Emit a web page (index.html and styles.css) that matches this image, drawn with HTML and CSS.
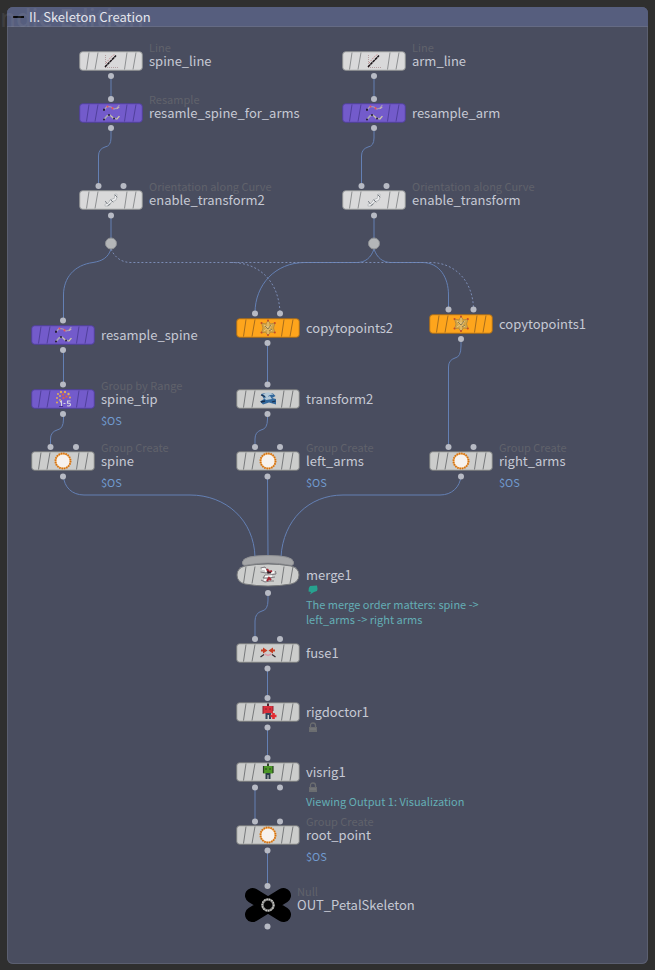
FILE: index.html
```html
<!DOCTYPE html>
<html lang="en">
<head>
<meta charset="utf-8">
<title>Skeleton Creation</title>
<link rel="stylesheet" href="styles.css">
</head>
<body>
<svg class="defs" aria-hidden="true">
  <defs>
    <g id="stripes"><path d="M10 1.5L7.500 18.500M19 1.500L16 18.500M48 1.500L45.500 18.500M57 1.500L54 18.500"/></g>
    <g id="plate"><rect class="face" x=".7" y=".7" width="62.600" height="18.600" rx="3"/><use href="#stripes"/></g>
    <g id="i-line">
      <path d="M26.500 4V16.500H39.500" fill="none" stroke="#b5a0a2" stroke-dasharray="1 1"/>
      <path d="M27 12L32 6L36 3" fill="none" stroke="#b8686c" stroke-width="1" stroke-dasharray="1 1.500"/>
      <path d="M26 16L37 4.500" stroke="#1b1418" stroke-width="1.500" stroke-dasharray="3 .4"/>
    </g>
    <g id="i-resample" fill="none" stroke-linecap="round">
      <path d="M25 7L28 3.500L32 4L35 6L38 5L40 2.500" stroke="#a99fb5" stroke-width="1.200"/>
      <path d="M25 16.500L28 13L31 12L34 15L38 16L40 13.500" stroke="#a8a8b4" stroke-width="1.500"/>
      <path d="M25 6.500V7M25 16.500V16.600M30 12V12.100M35 15.500V15.600" stroke="#221a33" stroke-width="2"/>
      <path d="M28.500 3.500V3.600M33.500 5V5.600" stroke="#e0525e" stroke-width="2"/>
      <path d="M38 5.500L40 4.500M32 13L34 14.500M38 16L40 13.500" stroke="#d5c5a9" stroke-width="1"/>
    </g>
    <g id="i-orient" fill="none" stroke-linecap="round">
      <path d="M27 15C32 15 30 10 34 10S36 6 37 5" stroke="#aeb2b5" stroke-width="3"/>
      <path d="M27 15C32 15 30 10 34 10S36 6 37 5" stroke="#f0f0f2" stroke-width="1.500"/>
      <path d="M26.500 11.500L28 13.500M29 15.500L31 14M32 10L34 12M36 5L38 7" stroke="#777c82" stroke-width="1"/>
    </g>
    <g id="i-range">
      <g fill="#e0ad56"><circle cx="27" cy="5" r="1"/><circle cx="30" cy="3" r="1.200"/><circle cx="34" cy="3" r="1.200"/><circle cx="37.500" cy="5" r="1.200"/><circle cx="26" cy="9" r="1"/><circle cx="29" cy="7" r="1"/><circle cx="26" cy="13.500" r="1"/><circle cx="39" cy="8.500" r="1"/><circle cx="29" cy="11" r="1"/></g>
      <g fill="#d8604b"><circle cx="32" cy="5.500" r="1.200"/><circle cx="35.500" cy="7.500" r="1.200"/><circle cx="32.500" cy="9" r="1.200"/></g>
      <path d="M29 13L30.500 12V17M32.500 14.500H34.500M39.500 12H36.500V14.200H38Q39.800 14.500 39.500 16Q39 17.300 36 16.800" fill="none" stroke="#d5d4df" stroke-width="1.100"/>
      <path d="M28 17.500H32" stroke="#463286"/>
    </g>
    <g id="i-group">
      <circle cx="32" cy="10" r="7.400" fill="#f7f2ee" stroke="#f3b060" stroke-width="1.600"/>
      <circle cx="32" cy="10" r="7.600" fill="none" stroke="#cf6f14" stroke-width="1.800" stroke-dasharray="1.400 .985"/>
    </g>
    <g id="i-copy">
      <path d="M32 2.500L34.500 6L39 5L37.500 10L39 14.500L34.500 14L32 17.500L29.500 14L25.500 15L27 10L25.500 5L30 6Z" fill="#d3a648" stroke="#ac8540" stroke-width=".8"/>
      <path d="M28 7L36 13M36 7L28 13M32 4V16M29 9L35 9" stroke="#e9c781" stroke-width="1" fill="none"/>
      <path d="M29 8L32 11L35 7M33 13L36 11" stroke="#8d7a4c" stroke-width="1" fill="none"/>
      <g fill="#c44a28"><circle cx="25.500" cy="5" r="1"/><circle cx="32" cy="2.500" r="1"/><circle cx="38.800" cy="5" r="1"/><circle cx="25.500" cy="14.500" r="1"/><circle cx="32" cy="17" r="1"/><circle cx="38.800" cy="14.500" r="1"/></g>
    </g>
    <g id="i-transform">
      <path d="M25 5L30 4L37 4.500L39.500 7L36 9L40 10V15.500L33 13.500L27 15.500L24 12.500L28 10Z" fill="#31679b"/>
      <path d="M27 5.500Q33 1 37.500 6Q33 5 31 9ZM28 9L34 7L36 10L30 11Z" fill="#b4c9d8"/>
      <path d="M25 6L29 7.500M36 13L39.500 12M25 13L29 12" stroke="#182d49" stroke-width="1.300"/>
    </g>
    <g id="i-merge" fill="none">
      <path d="M24.500 3L29 2L31 5M24.500 7L30 8L33 7M39.500 6L40 9L34 10L29 10L27 13L33 13L39 12M25 15L29 17L34 16L38 16" stroke="#6b646b" stroke-width=".8"/>
      <path d="M26 4L29 4L30 7M35 8L38 7M29 11.500L36 11M28 15L31 15" stroke="#fff" stroke-width="1.400"/>
      <path d="M31 4L33 7L36 6M31 16L33 13L35 15" stroke="#a72a36" stroke-width="2.200"/>
      <path d="M32 6V8L35 7.500" stroke="#301923" stroke-width="1.400"/>
    </g>
    <g id="i-fuse">
      <path d="M25 6.500H27V4.500L31.500 7.500L27 10.500V8.500H25ZM39 6.500H37V4.500L32.500 7.500L37 10.500V8.500H39Z" fill="#c63e25"/>
      <path d="M24.500 14L28 11.500M39.500 14L36 11.500" stroke="#332a31" stroke-width="1.300"/>
      <path d="M28.500 11L32 12.500L35.500 11" fill="none" stroke="#dd9aa7" stroke-width="1.500"/>
    </g>
    <g id="i-doctor">
      <path d="M32 1.500V5" stroke="#4b2630" stroke-width="2"/>
      <rect x="27" y="4" width="10" height="7.500" fill="#d9303b"/>
      <path d="M27 4V12M37 4V9M29 7H31M33 7H35" stroke="#8a2231" stroke-width="1"/>
      <path d="M30.500 11V17M34 11V17M29.500 12H34" stroke="#35465c" stroke-width="2"/>
      <path d="M37.500 11V17M34.500 14H40.500" stroke="#e22b31" stroke-width="2.600"/>
    </g>
    <g id="i-vis">
      <path d="M32 1.500V5" stroke="#32412b" stroke-width="2"/>
      <rect x="27" y="4" width="10" height="7.500" fill="#4c9827"/>
      <path d="M27.500 4V11M37 4V11M29 7H31M33 7H35" stroke="#263f22" stroke-width="1.200"/>
      <path d="M30.500 11V17M33.500 11V17M29.500 12H34" stroke="#2b3c49" stroke-width="2"/>
    </g>
    <g id="lock">
      <path d="M2.500 6V3.500Q2.500 1 5 1T7.500 3.500V6" fill="none" stroke="#6b6d70" stroke-width="1.300"/>
      <path d="M1 5H9V10H1Z" fill="#6b6d70"/>
      <path d="M2 7H8" stroke="#7d7f80"/>
    </g>
  </defs>
</svg>

<div class="watermark" aria-hidden="true">ndie Edition</div>
<main class="netbox">
  <header class="netbox-head">
    <button class="collapse" type="button" aria-label="Collapse"></button>
    <h1>II. Skeleton Creation</h1>
  </header>
  <div class="canvas">
    <svg class="wires" width="641" height="937" viewBox="7 27 641 937" aria-hidden="true">
      <g class="wire">
        <path d="M111 76V99M374 76V99"/>
        <path d="M111 128V138Q111 146 105 147Q98.500 149 98.500 156V186"/>
        <path d="M374 128V138Q374 146 368 147Q361.500 149 361.500 156V186"/>
        <path d="M111 215V243M374 215V243"/>
        <path d="M111 249C108 258 102 261 93 262.500C74 265 63.500 278 63.500 295V320"/>
        <path d="M374 249C371 258 365 262.500 357 262.500H305C275 262.500 255 285 255 313"/>
        <path d="M374 249C377 258 383 262.500 391 262.500H422C440 262.500 448.500 278 448.500 295V309"/>
        <path d="M63.500 350V384"/>
        <path d="M63.500 413V419Q63.500 429 57 430Q50.500 432 50.500 439V447"/>
        <path d="M267.500 343V384"/>
        <path d="M267.500 413V419Q267.500 429 261 430Q255 432 255 439V447"/>
        <path d="M461 339V346Q461 357 455 358Q448.500 360 448.500 367V447"/>
        <path d="M63.500 476C64 487 72 495 84 495H190C226 495 254 520 255 557"/>
        <path d="M267.500 476L268 557"/>
        <path d="M461 476C460 487 452 495 440 495H343C309 495 283 520 281 557"/>
        <path d="M268 593V600Q268 610 262 611Q255 613 255 621V639"/>
        <path d="M267.500 668V698M267.500 727V758M255 787V821M267.500 850V886"/>
      </g>
      <g class="wire dashed">
        <path d="M111 249C115 258 122 262.500 131 262.500H430C456 262.500 473 282 473.500 309"/>
        <path d="M231 262.500C260 262.500 279 282 280 313"/>
      </g>
      <g class="ports">
        <circle cx="111" cy="76" r="3"/><circle cx="111" cy="99" r="3"/><circle cx="111" cy="128" r="3"/>
        <circle cx="98.500" cy="186" r="3"/><circle cx="123.500" cy="186" r="3"/><circle cx="111" cy="215.500" r="3"/>
        <circle cx="374" cy="76" r="3"/><circle cx="374" cy="99" r="3"/><circle cx="374" cy="128" r="3"/>
        <circle cx="361.500" cy="186" r="3"/><circle cx="386.500" cy="186" r="3"/><circle cx="374" cy="215.500" r="3"/>
        <circle cx="63" cy="320.500" r="3"/><circle cx="63" cy="350" r="3"/><circle cx="63" cy="384.500" r="3"/>
        <circle cx="63" cy="414" r="3"/><circle cx="50.500" cy="447" r="3"/><circle cx="76" cy="447" r="3"/><circle cx="63" cy="476.500" r="3"/>
        <circle cx="255" cy="313.500" r="3"/><circle cx="280" cy="313.500" r="3"/><circle cx="267.500" cy="343" r="3"/>
        <circle cx="267.500" cy="384.500" r="3"/><circle cx="267.500" cy="414" r="3"/>
        <circle cx="255" cy="447" r="3"/><circle cx="280" cy="447" r="3"/><circle cx="267.500" cy="476.500" r="3"/>
        <circle cx="448.500" cy="309.500" r="3"/><circle cx="473.500" cy="309.500" r="3"/><circle cx="461" cy="339" r="3"/>
        <circle cx="448.500" cy="447" r="3"/><circle cx="473.500" cy="447" r="3"/><circle cx="461" cy="476.500" r="3"/>
        <circle cx="268" cy="593" r="3"/><circle cx="255" cy="639" r="3"/><circle cx="280" cy="639" r="3"/><circle cx="267.500" cy="668.500" r="3"/>
        <circle cx="267.500" cy="698" r="3"/><circle cx="267.500" cy="727.500" r="3"/><circle cx="267.500" cy="758" r="3"/>
        <circle cx="255" cy="787.500" r="3"/><circle cx="280" cy="787.500" r="3"/>
        <circle cx="255" cy="821.500" r="3"/><circle cx="280" cy="821.500" r="3"/><circle cx="267.500" cy="850.500" r="3"/>
        <circle cx="267.500" cy="886" r="3"/><circle cx="267.500" cy="926.500" r="3"/>
        <circle class="dot" cx="111" cy="243.500" r="5.500"/><circle class="dot" cx="374" cy="243.500" r="5.500"/>
        <path class="collector" d="M242.500 562Q243 555.500 268 555.500T293.500 562Q294 566.500 289 565Q268 561 247 565Q242 566.500 242.500 562Z"/>
      </g>
    </svg>

    <article class="node spine-line"><svg class="tile light"><use href="#plate"/><use href="#i-line"/></svg><p class="type">Line</p><h2>spine_line</h2></article>
    <article class="node resample-arms"><svg class="tile purple"><use href="#plate"/><use href="#i-resample"/></svg><p class="type">Resample</p><h2>resamle_spine_for_arms</h2></article>
    <article class="node enable-2"><svg class="tile light"><use href="#plate"/><use href="#i-orient"/></svg><p class="type">Orientation along Curve</p><h2>enable_transform2</h2></article>
    <article class="node arm-line"><svg class="tile light"><use href="#plate"/><use href="#i-line"/></svg><p class="type">Line</p><h2>arm_line</h2></article>
    <article class="node resample-arm"><svg class="tile purple"><use href="#plate"/><use href="#i-resample"/></svg><h2>resample_arm</h2></article>
    <article class="node enable-1"><svg class="tile light"><use href="#plate"/><use href="#i-orient"/></svg><p class="type">Orientation along Curve</p><h2>enable_transform</h2></article>
    <article class="node resample-spine"><svg class="tile purple"><use href="#plate"/><use href="#i-resample"/></svg><h2>resample_spine</h2></article>
    <article class="node spine-tip"><svg class="tile purple"><use href="#plate"/><use href="#i-range"/></svg><p class="type">Group by Range</p><h2>spine_tip</h2><p class="value">$OS</p></article>
    <article class="node spine"><svg class="tile"><use href="#plate"/><use href="#i-group"/></svg><p class="type">Group Create</p><h2>spine</h2><p class="value">$OS</p></article>
    <article class="node copy-2"><svg class="tile orange"><use href="#plate"/><use href="#i-copy"/></svg><h2>copytopoints2</h2></article>
    <article class="node transform-2"><svg class="tile"><use href="#plate"/><use href="#i-transform"/></svg><h2>transform2</h2></article>
    <article class="node left-arms"><svg class="tile"><use href="#plate"/><use href="#i-group"/></svg><p class="type">Group Create</p><h2>left_arms</h2><p class="value">$OS</p></article>
    <article class="node copy-1"><svg class="tile orange"><use href="#plate"/><use href="#i-copy"/></svg><h2>copytopoints1</h2></article>
    <article class="node right-arms"><svg class="tile"><use href="#plate"/><use href="#i-group"/></svg><p class="type">Group Create</p><h2>right_arms</h2><p class="value">$OS</p></article>
    <article class="node merge">
      <svg class="tile"><path class="face" d="M9 1Q32 -3 55 1Q63 3 63 10T55 19Q32 23 9 19Q1 17 1 10T9 1Z"/><use href="#stripes"/><use href="#i-merge"/></svg>
      <h2>merge1</h2>
      <svg class="badge" viewBox="0 0 10 10"><path d="M2 1L9 .5Q10 4 9 6L6 7L2 9.500L3 7L.5 6.500Q0 3 2 1Z" fill="#27a28f"/></svg>
      <p class="note">The merge order matters: spine -&gt;<br>left_arms -&gt; right arms</p>
    </article>
    <article class="node fuse"><svg class="tile"><use href="#plate"/><use href="#i-fuse"/></svg><h2>fuse1</h2></article>
    <article class="node rigdoctor"><svg class="tile"><use href="#plate"/><use href="#i-doctor"/></svg><h2>rigdoctor1</h2><svg class="badge" viewBox="0 0 10 10"><use href="#lock"/></svg></article>
    <article class="node visrig"><svg class="tile"><use href="#plate"/><use href="#i-vis"/></svg><h2>visrig1</h2><svg class="badge" viewBox="0 0 10 10"><use href="#lock"/></svg><p class="note">Viewing Output 1: Visualization</p></article>
    <article class="node root-point"><svg class="tile"><use href="#plate"/><use href="#i-group"/></svg><p class="type">Group Create</p><h2>root_point</h2><p class="value">$OS</p></article>
    <article class="node null">
      <svg class="tile" viewBox="0 0 46 34"><path d="M7.500 7.500L38.500 26.500M38.500 7.500L7.500 26.500" stroke="#000" stroke-width="15" stroke-linecap="round"/><circle cx="23" cy="17" r="5.500" fill="#050505" stroke="#777" stroke-width="2.500"/><circle cx="23" cy="17" r="5.800" fill="none" stroke="#c9c9c4" stroke-width="1.500" stroke-dasharray="1.500 1"/></svg>
      <p class="type">Null</p><h2>OUT_PetalSkeleton</h2>
    </article>
  </div>
</main>
</body>
</html>
```
FILE: styles.css
```css
* {
  box-sizing: border-box;
}

body {
  margin: 0;
  min-height: 100vh;
  padding: 7px 7px 6px;
  display: flex;
  flex-direction: column;
  background: #2f2f2f;
  font-family: "Noto Sans CJK SC", "Noto Sans", sans-serif;
  overflow-x: hidden;
}

h1, h2, p {
  margin: 0;
  font-weight: 400;
  white-space: nowrap;
}

.defs {
  position: absolute;
  width: 0;
  height: 0;
}

.watermark {
  position: absolute;
  left: 0;
  top: 0;
  z-index: 3;
  color: rgba(170, 172, 180, 0.13);
  font-family: "Open Sans", sans-serif;
  font-weight: 600;
  font-size: 25px;
  line-height: 34px;
  pointer-events: none;
}

.netbox {
  flex: 1;
  display: flex;
  flex-direction: column;
  border-radius: 6px;
  background: #494d5f;
  box-shadow: inset 0 0 0 1px #5b5f70;
}

.netbox-head {
  display: flex;
  align-items: center;
  gap: 5px;
  height: 20px;
  padding: 0 6px;
  border-radius: 6px 6px 0 0;
  background: #565e7e;
  border-bottom: 1px solid #656b84;
}

.netbox-head h1 {
  color: #e6e8f0;
  font-size: 13px;
  line-height: 18px;
}

.collapse {
  width: 11px;
  height: 2px;
  padding: 0;
  border: 0;
  background: #08090c;
}

.canvas {
  position: relative;
  flex: 1;
  min-height: 937px;
}

.wires {
  display: block;
}

.wire {
  fill: none;
  stroke: #6480b4;
  stroke-width: 1;
}

.dashed {
  stroke: #7b8cb5;
  stroke-dasharray: 2 2;
}

.ports {
  fill: #b7bac4;
}

.dot {
  fill: #b4b6b8;
  stroke: #8e9094;
}

.collector {
  fill: #a5a6a8;
  stroke: #909194;
}

.node {
  position: absolute;
  display: grid;
  grid-template-columns: 64px auto;
  grid-template-rows: 12px 16px;
  column-gap: 6px;
  justify-items: start;
}

.tile {
  grid-area: 2 / 1;
  width: 64px;
  height: 20px;
  margin: -2px 0;
  overflow: visible;
  fill: #cccdcc;
  stroke: #77797b;
}

.light {
  fill: #d9d9da;
  stroke: #8e9092;
}

.purple {
  fill: #735bcb;
  stroke: #50409b;
}

.orange {
  fill: #fea51c;
  stroke: #a66c1c;
}

.tile use[href^="#i-"] {
  stroke: none;
}

.type {
  grid-area: 1 / 2;
  color: #60626b;
  font-size: 11px;
  line-height: 12px;
}

.node h2 {
  grid-area: 2 / 2;
  color: #c6c9d4;
  font-size: 13px;
  line-height: 16px;
}

.value {
  grid-area: 3 / 2;
  margin-top: 5px;
  color: #719bd0;
  font-size: 11px;
  line-height: 16px;
}

.badge {
  grid-area: 3 / 2;
  width: 10px;
  height: 10px;
  margin: 2px;
}

.note {
  grid-area: 4 / 2;
  color: #64aeb5;
  font-size: 11px;
  line-height: 15px;
}

.spine-line { left: 72px; top: 14px; }
.resample-arms { left: 72px; top: 66px; }
.enable-2 { left: 72px; top: 153px; }
.arm-line { left: 335px; top: 14px; }
.resample-arm { left: 335px; top: 66px; }
.enable-1 { left: 335px; top: 153px; }
.resample-spine { left: 24px; top: 288px; }
.spine-tip { left: 24px; top: 352px; }
.spine { left: 24px; top: 414px; }
.copy-2 { left: 229px; top: 281px; }
.transform-2 { left: 229px; top: 352px; }
.left-arms { left: 229px; top: 414px; }
.copy-1 { left: 422px; top: 277px; }
.right-arms { left: 422px; top: 414px; }
.merge { left: 229px; top: 528px; }
.fuse { left: 229px; top: 606px; }
.rigdoctor { left: 229px; top: 665px; }
.visrig { left: 229px; top: 725px; }
.root-point { left: 229px; top: 788px; }
.null { left: 238px; top: 858px; grid-template-columns: 46px auto; }

.null .tile {
  width: 46px;
  height: 34px;
  margin: -9px 0;
}
```
